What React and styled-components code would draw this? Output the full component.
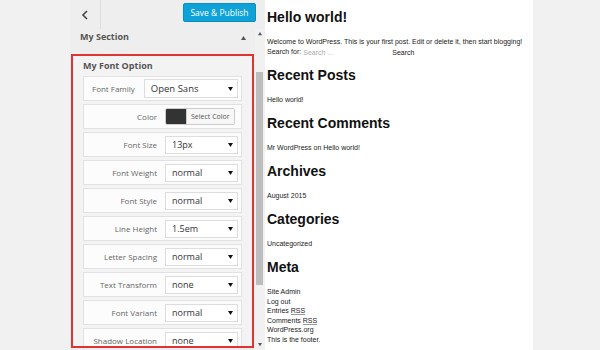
import React from 'react';
import styled, { createGlobalStyle } from 'styled-components';

const fontRows = [
  { label: 'Font Family', value: 'Open Sans', wide: true },
  { label: 'Color', color: '#333333' },
  { label: 'Font Size', value: '13px' },
  { label: 'Font Weight', value: 'normal' },
  { label: 'Font Style', value: 'normal' },
  { label: 'Line Height', value: '1.5em' },
  { label: 'Letter Spacing', value: 'normal' },
  { label: 'Text Transform', value: 'none' },
  { label: 'Font Variant', value: 'normal' },
  { label: 'Shadow Location', value: 'none' },
];

const widgets = [
  { title: 'Recent Posts', items: ['Hello world!'] },
  { title: 'Recent Comments', items: ['Mr WordPress on Hello world!'] },
  { title: 'Archives', items: ['August 2015'] },
  { title: 'Categories', items: ['Uncategorized'] },
];

const Triangle = ({ down, size = 5, color = '#222' }) => (
  <svg width={size} height={size * 0.8} viewBox="0 0 10 8">
    <polygon points={down ? '0,0 10,0 5,8' : '0,8 10,8 5,0'} fill={color} />
  </svg>
);

export default function App() {
  return (
    <>
      <GlobalStyle />
      <Page>
        <Gutter />
        <Sidebar>
          <Header>
            <BackButton>
              <svg width="7" height="10" viewBox="0 0 7 10">
                <polyline points="6,1 2,5 6,9" fill="none" stroke="#444" strokeWidth="1.6" />
              </svg>
            </BackButton>
            <PublishButton>Save &amp; Publish</PublishButton>
          </Header>
          <SidebarBody>
            <Panel>
              <SectionTitle>
                My Section
                <Triangle size={5} color="#555" />
              </SectionTitle>
              <Highlight>
                <GroupTitle>My Font Option</GroupTitle>
                {fontRows.map((row) => (
                  <Row key={row.label} $wide={row.wide}>
                    <Label $wide={row.wide}>{row.label}</Label>
                    {row.color ? (
                      <ColorButton>
                        <Swatch $color={row.color} />
                        <ColorText>Select Color</ColorText>
                      </ColorButton>
                    ) : (
                      <Select $wide={row.wide}>
                        {row.value}
                        <Triangle down size={5} color="#111" />
                      </Select>
                    )}
                  </Row>
                ))}
              </Highlight>
            </Panel>
            <ScrollBar>
              <ScrollArrow><Triangle size={4} color="#555" /></ScrollArrow>
              <ScrollTrack>
                <ScrollThumb />
              </ScrollTrack>
              <ScrollArrow><Triangle down size={4} color="#555" /></ScrollArrow>
            </ScrollBar>
          </SidebarBody>
        </Sidebar>
        <Preview>
          <Widget>
            <Heading>Hello world!</Heading>
            <Text>Welcome to WordPress. This is your first post. Edit or delete it, then start blogging!</Text>
            <SearchForm>
              Search for:
              <SearchInput placeholder="Search …" />
              <SearchButton>Search</SearchButton>
            </SearchForm>
          </Widget>
          {widgets.map((w) => (
            <Widget key={w.title}>
              <Heading>{w.title}</Heading>
              {w.items.map((item) => (
                <Text key={item}>{item}</Text>
              ))}
            </Widget>
          ))}
          <Widget>
            <Heading>Meta</Heading>
            <Text $tight>Site Admin</Text>
            <Text $tight>Log out</Text>
            <Text $tight>Entries <Abbr>RSS</Abbr></Text>
            <Text $tight>Comments <Abbr>RSS</Abbr></Text>
            <Text $tight>WordPress.org</Text>
            <Text $tight>This is the footer.</Text>
          </Widget>
        </Preview>
        <Gutter $grow />
      </Page>
    </>
  );
}

const GlobalStyle = createGlobalStyle`
  html, body {
    margin: 0;
    padding: 0;
    background: #f1f1f1;
    overflow: hidden;
  }
`;

const Page = styled.div`
  display: flex;
  width: 600px;
  height: 350px;
  overflow: hidden;
`;

const Gutter = styled.div`
  width: 70px;
  flex: ${props => (props.$grow ? 1 : 'none')};
  background: #f1f1f1;
`;

const Sidebar = styled.div`
  width: 195px;
  display: flex;
  flex-direction: column;
  background: #eeeeee;
  font-family: "Open Sans", sans-serif;
`;

const Header = styled.div`
  height: 29px;
  display: flex;
  align-items: center;
  justify-content: space-between;
  padding-right: 9px;
  box-sizing: border-box;
  background: #eeeeee;
`;

const BackButton = styled.div`
  width: 31px;
  height: 100%;
  display: flex;
  align-items: center;
  padding-left: 11px;
  box-sizing: border-box;
  border-right: 1px solid #dddddd;
`;

const PublishButton = styled.button`
  height: 19px;
  width: 73px;
  margin-top: -4px;
  padding: 0;
  border: 1px solid #0b8fc2;
  border-radius: 2px;
  background: #0ea2d8;
  color: #fff;
  font-family: "Open Sans", sans-serif;
  font-size: 8.5px;
`;

const SidebarBody = styled.div`
  flex: 1;
  display: flex;
  min-height: 0;
`;

const Panel = styled.div`
  flex: 1;
  display: flex;
  flex-direction: column;
`;

const SectionTitle = styled.div`
  height: 25px;
  display: flex;
  align-items: flex-start;
  justify-content: space-between;
  padding: 1px 9px 0 10px;
  box-sizing: border-box;
  line-height: 14px;
  font-size: 9px;
  font-weight: 700;
  color: #555;

  svg {
    margin-top: 6px;
  }
`;

const Highlight = styled.div`
  height: 294px;
  margin: 0 1px;
  border: 2px solid #dc3532;
  box-sizing: border-box;
  padding: 3px 10px 0;
  background: #f3f3f3;
  overflow: hidden;
`;

const GroupTitle = styled.div`
  line-height: 14px;
  font-size: 9px;
  font-weight: 700;
  color: #555;
  margin-bottom: 3px;
`;

const Row = styled.div`
  height: 25px;
  display: flex;
  align-items: center;
  gap: ${props => (props.$wide ? '9px' : '8px')};
  padding: 0 3px 0 8px;
  margin-bottom: 3px;
  box-sizing: border-box;
  border: 1px solid #e2e2e2;
  background: #fcfcfc;
`;

const Label = styled.div`
  width: ${props => (props.$wide ? 'auto' : '65px')};
  flex: none;
  text-align: right;
  white-space: nowrap;
  font-size: 8px;
  color: #666;
`;

const Select = styled.div`
  width: ${props => (props.$wide ? 'auto' : '73px')};
  flex: ${props => (props.$wide ? 1 : 'none')};
  height: ${props => (props.$wide ? '19px' : '18px')};
  display: flex;
  align-items: center;
  justify-content: space-between;
  padding: 0 4px 0 6px;
  box-sizing: border-box;
  border: 1px solid #dddddd;
  background: #fff;
  font-size: ${props => (props.$wide ? '9.5px' : '9px')};
  color: #333;
`;

const ColorButton = styled.div`
  display: flex;
  height: 17px;
  border: 1px solid #cccccc;
  border-radius: 2px;
  box-sizing: border-box;
  overflow: hidden;
`;

const Swatch = styled.span`
  width: 20px;
  background: ${props => props.$color};
`;

const ColorText = styled.span`
  padding: 0 4px;
  line-height: 15px;
  font-size: 7px;
  color: #555;
  background: #f7f7f7;
  border-left: 1px solid #cccccc;
`;

const ScrollBar = styled.div`
  width: 10px;
  display: flex;
  flex-direction: column;
  background: #f1f1f1;
`;

const ScrollArrow = styled.div`
  height: 10px;
  display: flex;
  align-items: center;
  justify-content: center;
`;

const ScrollTrack = styled.div`
  flex: 1;
  display: flex;
  flex-direction: column;
`;

const ScrollThumb = styled.div`
  margin: 33px 2px 0 1px;
  height: 213px;
  background: #bdbdbd;
`;

const Preview = styled.div`
  width: 268px;
  padding: 8px 0 0 2px;
  box-sizing: border-box;
  background: #fff;
  font-family: "Liberation Sans", Arial, sans-serif;
  color: #222;
`;

const Widget = styled.section`
  margin-bottom: 9px;
`;

const Heading = styled.h2`
  margin: 0 0 11px;
  font-size: 14px;
  line-height: 18px;
  font-weight: 700;
  color: #111;
`;

const Text = styled.div`
  font-size: 7px;
  line-height: ${props => (props.$tight ? '9.5px' : '10px')};
`;

const SearchForm = styled.form`
  display: flex;
  align-items: center;
  font-size: 7px;
  line-height: 10px;
  margin: 0 0 3px;
`;

const SearchInput = styled.input`
  width: 86px;
  margin: 0 0 0 2px;
  padding: 0;
  border: none;
  outline: none;
  background: transparent;
  font-family: inherit;
  font-size: 7px;

  &::placeholder {
    color: #aaa;
  }
`;

const SearchButton = styled.button`
  margin-left: 3px;
  padding: 0;
  border: none;
  background: none;
  font-family: inherit;
  font-size: 7px;
  color: #222;
`;

const Abbr = styled.abbr`
  text-decoration: none;
  border-bottom: 1px solid #999;
`;
